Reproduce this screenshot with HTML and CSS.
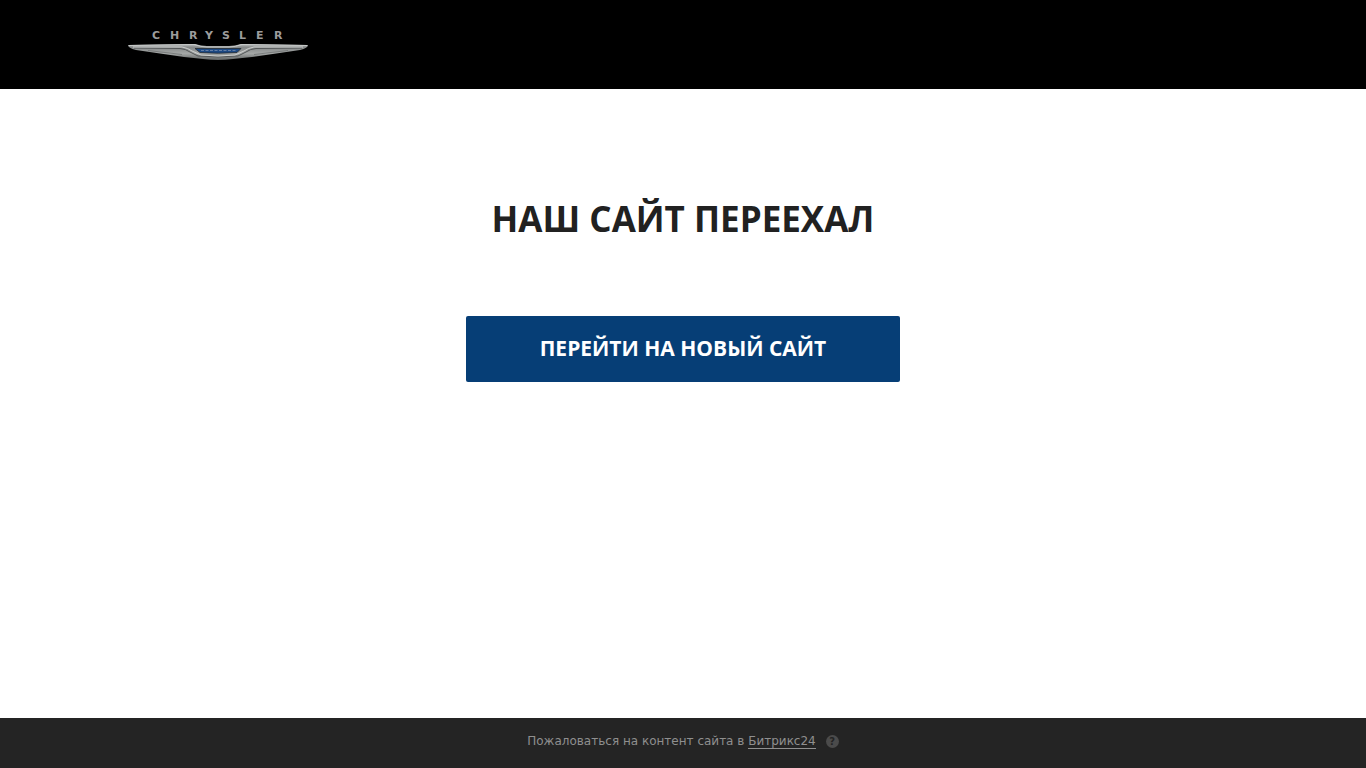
FILE: index.html
```html
<!DOCTYPE html>
<html lang="ru">
<head>
    <meta charset="UTF-8">
    <meta name="viewport" content="width=device-width, initial-scale=1.0">
    <title>Наш сайт переехал</title>
    <link rel="stylesheet" href="styles.css">
</head>
<body>

<header class="header">
    <div class="container">
        <a href="#" class="logo" aria-label="Chrysler">
            <svg width="180" height="34" viewBox="0 0 180 34">
                <defs>
                    <linearGradient id="silver" x1="0" y1="0" x2="0" y2="1">
                        <stop offset="0" stop-color="#c2c5c5"/>
                        <stop offset="0.2" stop-color="#858888"/>
                        <stop offset="0.6" stop-color="#a4a7a6"/>
                        <stop offset="1" stop-color="#606363"/>
                    </linearGradient>
                </defs>
                <text class="logo-text" x="24 42 61 77 94 111 128 146" y="12">CHRYSLER</text>
                <!-- wings -->
                <path fill="url(#silver)" d="M0 18 L67 17 Q73 19 79 19 L101 19 Q107 19 113 17 L180 18 Q180 21 172 23 L124 30 Q114 31 105 32 Q90 34 75 32 Q66 31 56 30 L8 23 Q0 21 0 18 Z"/>
                <path fill="none" stroke="#c6c9c8" d="M1 18.5 L66 17.5 Q73 20 79 20 L101 20 Q107 20 114 17.5 L179 18.5"/>
                <path fill="none" stroke="#535657" d="M6 21 L52 21.5 Q58 22 62 25 L70 29 Q90 31 110 29 L118 25 Q122 22 128 21.5 L174 21"/>
                <path fill="none" stroke="#ced0cf" d="M5 20 L54 20 Q60 21 64 24 L73 28 Q90 30 107 28 L116 24 Q120 21 126 20 L175 20"/>
                <path fill="none" stroke="#686b6b" stroke-width="0.7" d="M20 23.5 L54 27.5 M160 23.5 L126 27.5"/>
                <!-- badge -->
                <path fill="#1b4883" stroke="#252b31" stroke-width="0.8" d="M67 21.5 L113 21.5 L109 25.5 Q90 27 72 25.5 Z"/>
                <path fill="none" stroke="#738caf" stroke-dasharray="3 1.5" stroke-width="0.8" d="M73 23.5 L108 23.5"/>
            </svg>
        </a>
    </div>
</header>

<main class="content">
    <h1>НАШ САЙТ ПЕРЕЕХАЛ</h1>
    <a href="#" class="btn">ПЕРЕЙТИ НА НОВЫЙ САЙТ</a>
</main>

<footer class="footer">
    <span>Пожаловаться на контент сайта в <a href="#" class="footer-link">Битрикс24</a></span>
    <button type="button" class="help" aria-label="Помощь">?</button>
</footer>

</body>
</html>
```
FILE: styles.css
```css
* { box-sizing: border-box; }
body { display: flex; flex-direction: column; min-height: 100vh; margin: 0; background-color: #ffffff; font-family: "Open Sans", sans-serif; }
.header { padding: 27px 0 28px; background-color: #000000; }
.container { max-width: 1110px; margin: 0 auto; }
.logo { display: block; width: 180px; }
.logo svg { display: block; }
.logo-text { fill: #9c9c9c; font-family: "DejaVu Sans", sans-serif; font-size: 11px; font-weight: bold; }
.content { display: flex; flex: 1; flex-direction: column; align-items: center; padding: 105px 20px 40px; }
h1 { margin: 0 0 72px; color: #212121; font-size: 35px; line-height: 50px; text-align: center; }
.btn { padding: 0 74px 2px; border-radius: 2px; background-color: #063e76; color: #ffffff; font-size: 21px; font-weight: bold; line-height: 64px; text-align: center; text-decoration: none; }
.btn:hover { background-color: #052f5a; }
.footer { display: flex; align-items: center; justify-content: center; gap: 10px; min-height: 50px; padding: 0 20px 4px; background-color: #242424; color: #8f8f8f; font-family: "DejaVu Sans", sans-serif; font-size: 12px; line-height: 14px; }
.footer-link { border-bottom: 1px solid #8f8f8f; color: #8f8f8f; text-decoration: none; }
.help { width: 13px; height: 13px; padding: 0; border: none; border-radius: 50%; background-color: #4b4b4b; color: #242424; font-family: "DejaVu Sans", sans-serif; font-size: 10px; font-weight: bold; line-height: 13px; cursor: pointer; }
```
